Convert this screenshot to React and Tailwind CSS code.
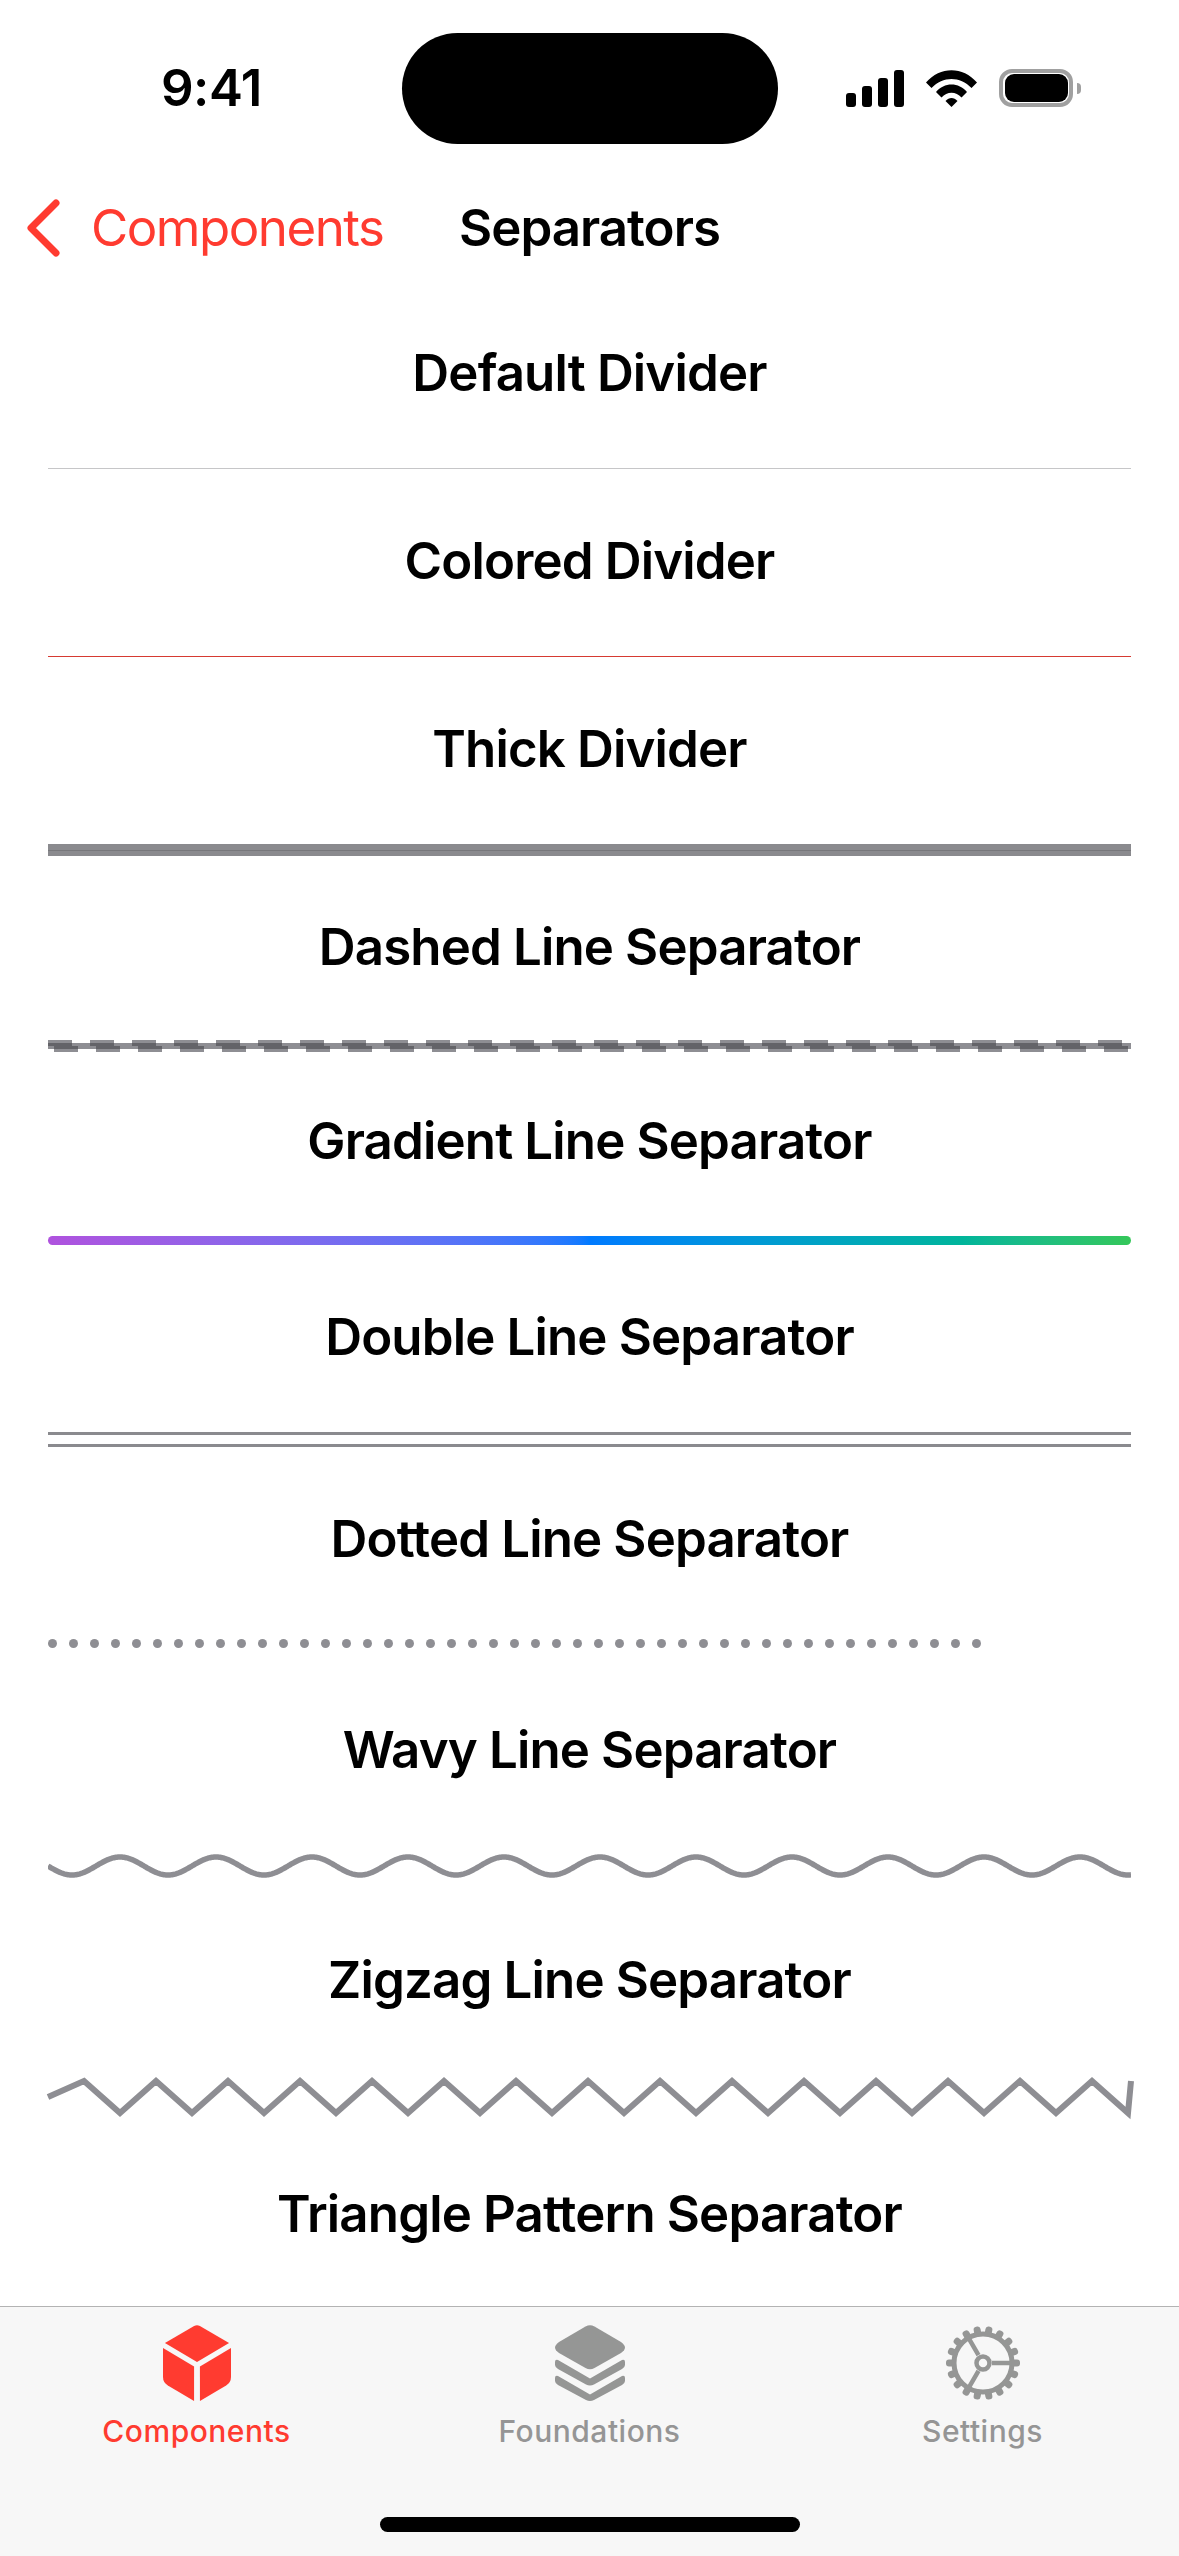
const red = "#ff3b30";
const line = "#8e8e93";

const Row = ({ title, pad, children }) => (
  <div className={`flex flex-col ${pad}`}>
    <h2 className="text-center text-[51px] leading-[66px] font-semibold tracking-[-0.85px] text-black">{title}</h2>
    {children && <div>{children}</div>}
  </div>
);

const StatusIcons = () => (
  <div className="flex items-center gap-[22px]">
    <svg width="58" height="37" viewBox="0 0 58 37">
      <rect x="0" y="23" width="10" height="14" rx="3" fill="#000" />
      <rect x="16" y="16" width="10" height="21" rx="3" fill="#000" />
      <rect x="32" y="8" width="10" height="29" rx="3" fill="#000" />
      <rect x="48" y="0" width="10" height="37" rx="3" fill="#000" />
    </svg>
    <svg width="51" height="37" viewBox="0 0 51 37">
      <path d="M0 12.5 C14 -4 37 -4 51 12.5 L45.5 18 C34 6 17 6 5.500 18 Z" fill="#000" />
      <path d="M10 22 C18 12 33 12 41 22 L35.500 27.500 C30 21 21 21 15.500 27.500 Z" fill="#000" />
      <path d="M19.500 31 C23 27 28 27 31.500 31 L25.500 37 Z" fill="#000" />
    </svg>
    <div className="flex items-center gap-[4px]">
      <div className="flex h-[38px] w-[74px] items-center justify-center rounded-[13px] border-[4px] border-[#a0a0a0]">
        <div className="h-[28px] w-[63px] rounded-[9px] bg-black" />
      </div>
      <div className="h-[11px] w-[4px] rounded-r-full bg-[#a0a0a0]" />
    </div>
  </div>
);

const wavePoints = Array.from({ length: 1084 }, (_, x) => `${x},${12 + 9 * Math.sin((2 * Math.PI * x) / 96)}`).join(" ");

const zigzagPoints = (() => {
  const pts = ["0,21", "36,5"];
  for (let x = 72, up = false; x <= 1080; x += 36, up = !up) pts.push(`${x},${up ? 5 : 37}`);
  pts.push("1083,5");
  return pts.join(" ");
})();

const DashedLine = () => (
  <svg width="1083" height="12" viewBox="0 0 1083 12" className="block">
    <line x1="0" y1="3" x2="1083" y2="3" stroke={line} strokeWidth="6" strokeDasharray="24 18" />
    <line x1="6" y1="9" x2="1083" y2="9" stroke={line} strokeWidth="6" strokeDasharray="24 18" />
    <line x1="0" y1="6" x2="1083" y2="6" stroke={line} strokeWidth="6" />
    <line x1="0" y1="4.500" x2="1083" y2="4.500" stroke="#636368" strokeWidth="3" strokeDasharray="24 18" />
    <line x1="6" y1="7.500" x2="1083" y2="7.500" stroke="#636368" strokeWidth="3" strokeDasharray="24 18" />
  </svg>
);

const CubeIcon = () => (
  <svg width="68" height="76" viewBox="0 0 70 76" preserveAspectRatio="none">
    <path d="M2 18 L32 1 Q35 -0.500 38 1 L68 18 L35 37 Z" fill={red} />
    <path d="M0 23 L32 41.500 V76 L5 60.500 Q0 57.500 0 52 Z" fill={red} />
    <path d="M70 23 L38 41.500 V76 L65 60.500 Q70 57.500 70 52 Z" fill={red} />
  </svg>
);

const LayersIcon = () => (
  <svg width="70" height="76" viewBox="0 0 70 76">
    <path d="M30.500 1.500 Q35 -1 39.500 1.500 L66 17 Q70 20 70 22.500 Q70 25 66 28 L39.500 43 Q35 45.500 30.500 43 L4 28 Q0 25 0 22.500 Q0 20 4 17 Z" fill="#959695" />
    <path d="M3 35 L35 53.500 L67 35 Q70 34 70 37 V40 Q70 42 67 44 L39 59.500 Q35 61.500 31 59.500 L3 44 Q0 42 0 40 V37 Q0 34 3 35 Z" fill="#959695" />
    <path d="M3 51 L35 69.500 L67 51 Q70 50 70 53 V56 Q70 58 67 60 L39 75 Q35 77 31 75 L3 60 Q0 58 0 56 V53 Q0 50 3 51 Z" fill="#959695" />
  </svg>
);

const GearIcon = () => {
  const teeth = Array.from({ length: 18 }, (_, i) => i * 20 + 10);
  return (
    <svg width="76" height="76" viewBox="-38 -38 76 76" fill="none" stroke="#959695">
      {teeth.map((deg) => (
        <rect key={deg} x="-3.500" y="-37" width="7" height="10" rx="3" fill="#959695" stroke="none" transform={`rotate(${deg})`} />
      ))}
      <circle r="29" strokeWidth="5" />
      <circle r="6.500" strokeWidth="4.500" />
      <path d="M9 0 H29 M-4.500 7.800 L-14.500 25.100 M-4.500 -7.800 L-14.500 -25.100" strokeWidth="4.500" />
    </svg>
  );
};

const tabs = [
  { label: "Components", icon: <CubeIcon />, color: "text-[#ff3b30]" },
  { label: "Foundations", icon: <LayersIcon />, color: "text-[#959595]" },
  { label: "Settings", icon: <GearIcon />, color: "text-[#959595]" },
];

export default function App() {
  return (
    <div className="flex h-[2556px] w-[1179px] flex-col overflow-hidden bg-white font-['Inter','Liberation_Sans',sans-serif]">
      <header className="relative flex h-[150px] shrink-0 items-start justify-between pt-[65px] pr-[98px] pl-[161px]">
        <span className="text-[51px] leading-[46px] font-semibold tracking-[-0.5px] text-black">9:41</span>
        <div className="absolute top-[33px] left-[402px] h-[111px] w-[376px] rounded-[56px] bg-black" />
        <div className="pt-[4px]">
          <StatusIcons />
        </div>
      </header>

      <nav className="flex h-[156px] shrink-0 items-start pt-[45px]">
        <div className="flex-1">
          <div className="flex items-center gap-[30px] pl-[27px]">
            <svg width="34" height="58" viewBox="0 0 34 58" fill="none" stroke={red} strokeWidth="7" strokeLinecap="round" strokeLinejoin="round">
              <path d="M29 4 L4 29 L29 54" />
            </svg>
            <span className="text-[51px] leading-[66px] tracking-[-1.5px] text-[#ff3b30]">Components</span>
          </div>
        </div>
        <h1 className="text-[51px] leading-[66px] font-semibold tracking-[-1px] text-black">Separators</h1>
        <div className="flex-1" />
      </nav>

      <main className="min-h-0 flex-1 overflow-hidden px-[48px]">
        <Row title="Default Divider" pad="pt-[34px] gap-[62px]">
          <div className="h-px bg-[#c6c6c8]" />
        </Row>
        <Row title="Colored Divider" pad="pt-[59px] gap-[62px]">
          <div className="h-px bg-[#d63a32]" />
        </Row>
        <Row title="Thick Divider" pad="pt-[59px] gap-[62px]">
          <div className="flex h-[12px] flex-col justify-center bg-[#8a8a8e]">
            <div className="h-px bg-[#77777b]" />
          </div>
        </Row>
        <Row title="Dashed Line Separator" pad="pt-[58px] gap-[60px]">
          <DashedLine />
        </Row>
        <Row title="Gradient Line Separator" pad="pt-[56px] gap-[62px]">
          <div className="h-[9px] rounded-full bg-gradient-to-r from-[#af52de] via-[#007aff] to-[#34c759]" />
        </Row>
        <Row title="Double Line Separator" pad="pt-[59px] gap-[62px]">
          <div className="h-[3px] bg-[#8a8a8e]" />
          <div className="mt-[9px] h-[3px] bg-[#8a8a8e]" />
        </Row>
        <Row title="Dotted Line Separator" pad="pt-[59px] gap-[67px]">
          <div className="flex gap-[12px]">
            {Array.from({ length: 45 }, (_, i) => (
              <div key={i} className="size-[9px] shrink-0 rounded-full bg-[#8e8e93]" />
            ))}
          </div>
        </Row>
        <Row title="Wavy Line Separator" pad="pt-[69px] gap-[71px]">
          <svg width="1083" height="24" viewBox="0 0 1083 24" fill="none" stroke={line} strokeWidth="5.500" className="block">
            <polyline points={wavePoints} />
          </svg>
        </Row>
        <Row title="Zigzag Line Separator" pad="pt-[69px] gap-[63px]">
          <svg width="1083" height="42" viewBox="0 0 1083 42" fill="none" stroke={line} strokeWidth="6" className="block overflow-visible">
            <polyline points={zigzagPoints} />
          </svg>
        </Row>
        <Row title="Triangle Pattern Separator" pad="pt-[63px]" />
      </main>

      <footer className="relative h-[250px] shrink-0 border-t border-[#b3b3b3] bg-[#f7f7f7]">
        <div className="grid grid-cols-3 pt-[18px]">
          {tabs.map((tab) => (
            <div key={tab.label} className="flex flex-col items-center gap-[12px]">
              {tab.icon}
              <span className={`text-[30px] leading-[36px] font-medium tracking-[0.5px] ${tab.color}`}>{tab.label}</span>
            </div>
          ))}
        </div>
        <div className="absolute top-[210px] left-[380px] h-[15px] w-[420px] rounded-full bg-black" />
      </footer>
    </div>
  );
}
